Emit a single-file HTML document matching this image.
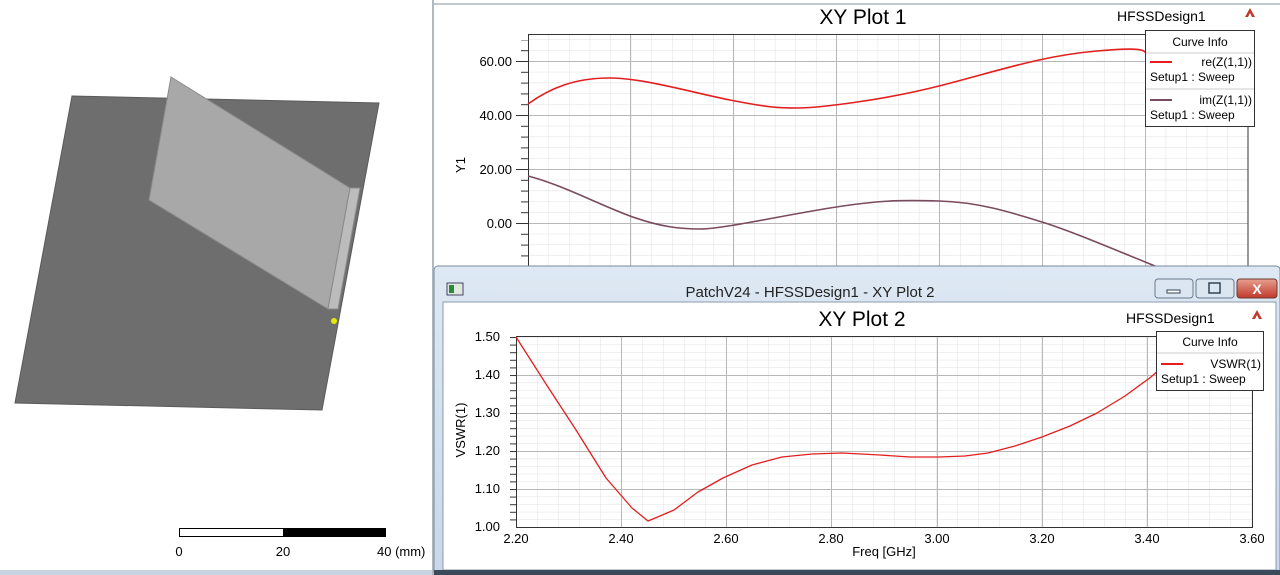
<!DOCTYPE html>
<html><head><meta charset="utf-8"><style>
html,body{margin:0;padding:0;width:1280px;height:575px;overflow:hidden;background:#fff}
svg text{font-family:"Liberation Sans",sans-serif}
</style></head><body>
<svg width="1280" height="575" viewBox="0 0 1280 575" xmlns="http://www.w3.org/2000/svg">
<defs>
<pattern id="g1" x="528" y="7" width="20.57" height="10.8" patternUnits="userSpaceOnUse">
<path d="M0 0V10.8M0 0H20.57" stroke="#e0e0e0" stroke-width="1" fill="none"/></pattern>
<pattern id="g2" x="516" y="337" width="21" height="7.6" patternUnits="userSpaceOnUse">
<path d="M0 0V7.6M0 0H21" stroke="#e0e0e0" stroke-width="1" fill="none"/></pattern>
<pattern id="t1" x="0" y="7" width="10" height="10.8" patternUnits="userSpaceOnUse">
<path d="M0 0.5H10" stroke="#333" stroke-width="1"/></pattern>
<pattern id="t2" x="0" y="337" width="10" height="7.6" patternUnits="userSpaceOnUse">
<path d="M0 0.5H10" stroke="#333" stroke-width="1"/></pattern>
<linearGradient id="tb" x1="0" y1="0" x2="0" y2="1"><stop offset="0" stop-color="#dde8f3"/><stop offset="1" stop-color="#c8d8ea"/></linearGradient>
<linearGradient id="cl" x1="0" y1="0" x2="0" y2="1"><stop offset="0" stop-color="#e8a090"/><stop offset="1" stop-color="#c0392b"/></linearGradient>
</defs>
<rect x="0" y="0" width="432" height="575" fill="#fff"/>
<polygon points="72,96 379,103 322,410 15,403" fill="#6e6e6e" stroke="#5a5a5a"/>
<polygon points="171,77 350,188 328,309 149,200" fill="#a8a8a8" stroke="#8a8a8a"/>
<polygon points="350,188 360,188 338,309 328,309" fill="#bcbcbc" stroke="#8a8a8a"/>
<ellipse cx="334" cy="321" rx="3" ry="3" fill="#e8e800"/>
<rect x="179.5" y="528.5" width="104" height="8" fill="#fff" stroke="#000"/>
<rect x="284" y="528" width="102" height="9" fill="#000"/>
<text x="179" y="556" font-size="13" text-anchor="middle">0</text>
<text x="283" y="556" font-size="13" text-anchor="middle">20</text>
<text x="377" y="556" font-size="13">40 (mm)</text>
<rect x="0" y="570" width="434" height="5" fill="#c8d4e0"/>
<rect x="432" y="0" width="2" height="575" fill="#b0b8c0"/>
<!-- plot 1 -->
<rect x="434" y="3" width="846" height="265" fill="#fff"/>
<rect x="434" y="3" width="846" height="2" fill="#c0c8d0"/>
<rect x="528" y="34" width="720" height="234" fill="url(#g1)"/>
<g stroke="#b8b8b8" stroke-width="1">
<path d="M630.5 34V268M733.5 34V268M836.5 34V268M939.5 34V268M1042.5 34V268M1145.5 34V268M528 61.5H1248M528 115.5H1248M528 169.5H1248M528 223.5H1248"/></g>
<rect x="521" y="40" width="7" height="228" fill="url(#t1)"/>
<path d="M516 61.5H528M516 115.5H528M516 169.5H528M516 223.5H528" stroke="#333"/>
<rect x="528.5" y="34.5" width="719.5" height="240" fill="none" stroke="#333"/>
<text x="863" y="24" font-size="21" text-anchor="middle">XY Plot 1</text>
<text x="1117" y="21" font-size="14">HFSSDesign1</text>
<path d="M1250 8l-5 9h3l2-4 2 4h3z" fill="#c0392b"/>
<g font-size="13" text-anchor="end"><text x="512" y="66">60.00</text><text x="512" y="120">40.00</text><text x="512" y="174">20.00</text><text x="512" y="228">0.00</text></g>
<text x="465" y="165" font-size="13" transform="rotate(-90 465 165)" text-anchor="middle">Y1</text>
<path d="M528 104C550 88,575 78,609 78S690 92,730 100S780 108,798 108S880 101,939 86S1040 56,1097 51S1140 52,1150 55" fill="none" stroke="#e41e1e" stroke-width="1.6"/>
<path d="M528 176C560 184,600 205,630 216S680 229,701 229S780 216,830 208S900 200,939 201S1010 212,1042 222S1120 252,1160 268" fill="none" stroke="#7a4a5e" stroke-width="1.6"/>
<rect x="1145.5" y="30.5" width="109" height="96" fill="#fff" stroke="#333"/>
<text x="1200" y="46" font-size="12" text-anchor="middle">Curve Info</text>
<path d="M1146 53H1254M1146 89H1254" stroke="#ccc"/>
<path d="M1150 62H1172" stroke="#e41e1e" stroke-width="2"/>
<text x="1252" y="66" font-size="12" text-anchor="end">re(Z(1,1))</text>
<text x="1150" y="81" font-size="12">Setup1 : Sweep</text>
<path d="M1150 100H1172" stroke="#7a4a5e" stroke-width="2"/>
<text x="1252" y="104" font-size="12" text-anchor="end">im(Z(1,1))</text>
<text x="1150" y="119" font-size="12">Setup1 : Sweep</text>
<!-- plot 2 window -->
<rect x="434" y="266" width="846" height="309" rx="4" fill="url(#tb)" stroke="#7a8a9c"/>
<rect x="447" y="283" width="16" height="12" fill="#e0e8e0" stroke="#446"/>
<rect x="449" y="285" width="5" height="8" fill="#2a8a3a"/>
<text x="810" y="297" font-size="15" text-anchor="middle" fill="#222">PatchV24 - HFSSDesign1 - XY Plot 2</text>
<rect x="1155" y="279" width="38" height="19" rx="3" fill="#dce6f2" stroke="#6a7a8c"/>
<rect x="1167" y="290" width="13" height="3" fill="#fff" stroke="#345"/>
<rect x="1196" y="279" width="38" height="19" rx="3" fill="#dce6f2" stroke="#6a7a8c"/>
<rect x="1209" y="283" width="11" height="10" fill="none" stroke="#345" stroke-width="1.5"/>
<rect x="1237" y="279" width="40" height="19" rx="3" fill="url(#cl)" stroke="#6a3a30"/>
<text x="1257" y="294" font-size="14" font-weight="bold" fill="#fff" text-anchor="middle">X</text>
<rect x="443" y="302" width="833" height="268" fill="#fff" stroke="#8a9aac"/>
<rect x="516" y="337" width="736" height="190" fill="url(#g2)"/>
<g stroke="#b8b8b8" stroke-width="1">
<path d="M621.5 337V527M726.5 337V527M831.5 337V527M937.5 337V527M1042.5 337V527M1147.5 337V527M516 375.5H1252M516 413.5H1252M516 451.5H1252M516 489.5H1252"/></g>
<rect x="510" y="337" width="6" height="190" fill="url(#t2)"/>
<rect x="516.5" y="336.5" width="736" height="191" fill="none" stroke="#333"/>
<text x="862" y="326" font-size="21" text-anchor="middle">XY Plot 2</text>
<text x="1126" y="323" font-size="14">HFSSDesign1</text>
<path d="M1257 310l-5 9h3l2-4 2 4h3z" fill="#c0392b"/>
<g font-size="13" text-anchor="end"><text x="500" y="341">1.50</text><text x="500" y="379">1.40</text><text x="500" y="417">1.30</text><text x="500" y="455">1.20</text><text x="500" y="493">1.10</text><text x="500" y="531">1.00</text></g>
<text x="465" y="430" font-size="13" transform="rotate(-90 465 430)" text-anchor="middle">VSWR(1)</text>
<g font-size="13" text-anchor="middle"><text x="516" y="543">2.20</text><text x="621" y="543">2.40</text><text x="726" y="543">2.60</text><text x="831" y="543">2.80</text><text x="937" y="543">3.00</text><text x="1042" y="543">3.20</text><text x="1147" y="543">3.40</text><text x="1252" y="543">3.60</text></g>
<text x="884" y="556" font-size="13" text-anchor="middle">Freq [GHz]</text>
<polyline points="516,337 546,384 576,430 606,478 632,508 648,521 660,516 674,510 698,492 723,478 752,465 782,457 812,454 842,453 880,455 910,457 939,457 965,456 988,453 1015,446 1042,437 1070,426 1097,413 1125,396 1151,377 1170,360 1185,345" fill="none" stroke="#e41e1e" stroke-width="1.3" stroke-linejoin="round"/>
<rect x="1156.5" y="331.5" width="107" height="59" fill="#fff" stroke="#333"/>
<text x="1210" y="346" font-size="12" text-anchor="middle">Curve Info</text>
<path d="M1157 353H1263" stroke="#ccc"/>
<path d="M1161 364H1183" stroke="#e41e1e" stroke-width="2"/>
<text x="1261" y="368" font-size="12" text-anchor="end">VSWR(1)</text>
<text x="1161" y="383" font-size="12">Setup1 : Sweep</text>
<rect x="434" y="570" width="846" height="5" fill="#3a4a5a"/>
</svg>
</body></html>
